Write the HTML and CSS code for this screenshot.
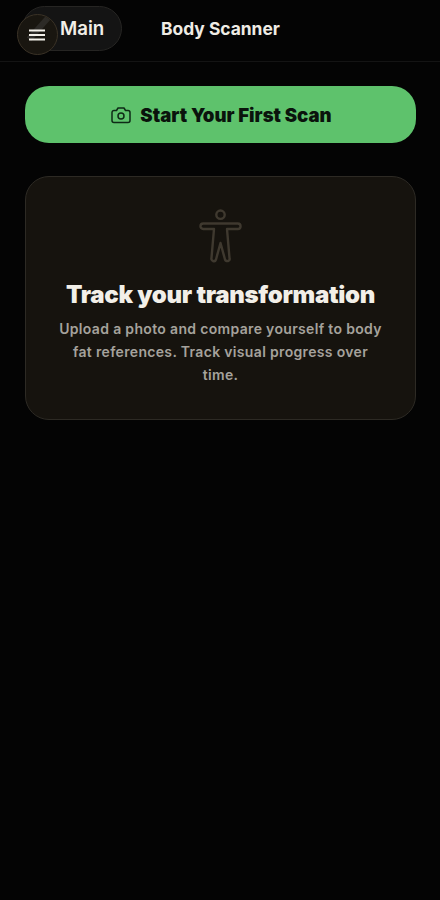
FILE: index.html
```html
<!DOCTYPE html>
<html lang="en">
<head>
<meta charset="utf-8">
<title>Body Scanner</title>
<link rel="stylesheet" href="styles.css">
</head>
<body>
<header class="topbar">
  <div class="main-pill">Main</div>
  <h1 class="page-title">Body Scanner</h1>
  <button class="menu-btn" aria-label="Menu">
    <span class="menu-sheen"></span>
    <svg class="menu-icon" viewBox="0 0 16 12" width="16" height="12"><path d="M0 1.5h16M0 6h16M0 10.5h16" fill="none" stroke="#f2efe8" stroke-width="2"/></svg>
  </button>
</header>
<main class="content">
  <button class="scan-btn">
    <svg class="camera" viewBox="0 0 24 24" width="24" height="24" fill="none" stroke="#0e2a16" stroke-width="1.5" stroke-linecap="round" stroke-linejoin="round"><path d="M3 9.500A2 2 0 0 1 5 7.500h2.500L9 5h6l1.500 2.500H19a2 2 0 0 1 2 2v8a2 2 0 0 1-2 2H5a2 2 0 0 1-2-2z"/><circle cx="12" cy="13" r="3"/></svg>
    <span>Start Your First Scan</span>
  </button>
  <section class="card">
    <svg class="figure" viewBox="0 0 44 56" width="44" height="56" fill="none" stroke="#3f392f" stroke-width="2.400" stroke-linecap="round" stroke-linejoin="round"><circle cx="21.500" cy="6.700" r="4.200"/><path d="M4.200 15.500H38.800a2.750 2.750 0 0 1 0 5.500H28L30.500 50a2 2 0 0 1-4.500 1.500L21.500 35l-4.500 16.500A2 2 0 0 1 12.500 50L15 21H4.200a2.750 2.750 0 0 1 0-5.500z"/></svg>
    <h2 class="card-title">Track your transformation</h2>
    <p class="card-text">Upload a photo and compare yourself to body fat references. Track visual progress over time.</p>
  </section>
</main>
</body>
</html>
```

FILE: styles.css
```css
* { box-sizing: border-box; }
html, body { margin: 0; height: 100%; }
body {
  background: #040404;
  color: #f2efe8;
  font-family: Inter, "Liberation Sans", sans-serif;
}
.topbar {
  position: relative;
  height: 62px;
  border-bottom: 1px solid #141414;
  display: flex;
  align-items: flex-start;
  padding: 6px 0 0 22px;
}
.main-pill {
  width: 100px;
  height: 45px;
  border-radius: 23px;
  background: #141414;
  border: 1px solid #262523;
  font-size: 18.7px;
  font-weight: 600;
  line-height: 43px;
  padding-left: 37px;
}
.page-title {
  margin: 0 0 0 39px;
  font-size: 17.400px;
  font-weight: 700;
  line-height: 46px;
  color: #efece5;
}
.menu-btn {
  position: absolute;
  left: 16.500px;
  top: 14px;
  width: 41px;
  height: 41px;
  padding: 0;
  border-radius: 50%;
  background: #191610;
  border: 1px solid #3a3226;
  display: flex;
  align-items: center;
  justify-content: center;
  overflow: hidden;
}
.menu-sheen {
  position: absolute;
  left: 18px;
  top: -2px;
  width: 6px;
  height: 30px;
  background: #2c2a26;
  transform: rotate(42deg);
}
.menu-icon { position: relative; }
.content {
  padding: 24px 24px 0 25px;
  display: flex;
  flex-direction: column;
  gap: 33px;
}
.scan-btn {
  height: 57px;
  border: 0;
  border-radius: 24px;
  background: #5ec26c;
  color: #0a130c;
  font-family: inherit;
  font-size: 18.600px;
  font-weight: 900;
  display: flex;
  align-items: center;
  justify-content: center;
  gap: 7px;
}
.card {
  height: 244px;
  border-radius: 24px;
  background: #16130e;
  border: 1px solid #2d2a24;
  display: flex;
  flex-direction: column;
  align-items: center;
  padding: 31px 31px 0;
  text-align: center;
}
.card-title {
  margin: 16px 0 0;
  font-size: 24px;
  font-weight: 900;
  letter-spacing: -0.3px;
  line-height: 30px;
  color: #f2efe8;
  white-space: nowrap;
}
.card-text {
  margin: 7px 0 0;
  font-size: 14px;
  font-weight: 600;
  line-height: 23px;
  letter-spacing: 0.33px;
  color: #a5a29c;
}
```
